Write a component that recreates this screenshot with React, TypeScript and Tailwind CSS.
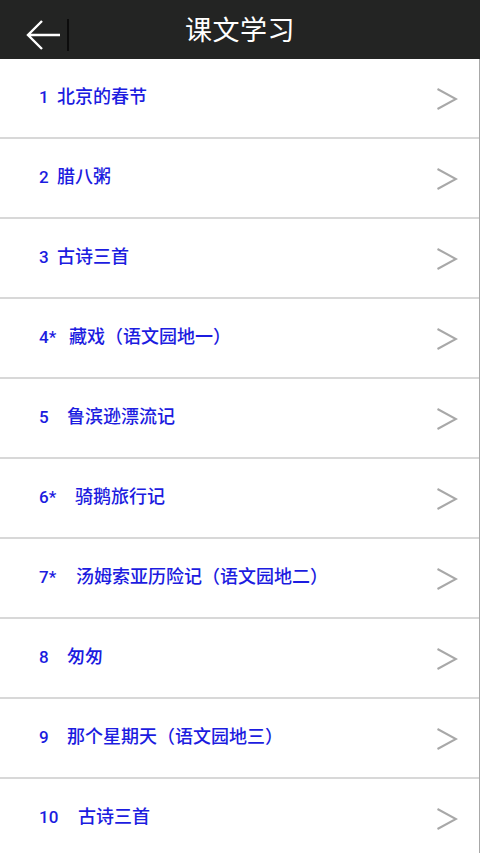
import React from "react";

type Lesson = { num: string; title: string; numClass: string };

const lessons: Lesson[] = [
  { num: "1", title: "北京的春节", numClass: "w-[18px]" },
  { num: "2", title: "腊八粥", numClass: "w-[18px]" },
  { num: "3", title: "古诗三首", numClass: "w-[18px]" },
  { num: "4*", title: "藏戏（语文园地一）", numClass: "w-[30px]" },
  { num: "5", title: "鲁滨逊漂流记", numClass: "w-[28px]" },
  { num: "6*", title: "骑鹅旅行记", numClass: "w-[36px]" },
  { num: "7*", title: "汤姆索亚历险记（语文园地二）", numClass: "w-[37px]" },
  { num: "8", title: "匆匆", numClass: "w-[28px]" },
  { num: "9", title: "那个星期天（语文园地三）", numClass: "w-[28px]" },
  { num: "10", title: "古诗三首", numClass: "w-[39px]" },
];

const Chevron = () => (
  <svg width="22" height="24" viewBox="0 0 22 24" fill="none">
    <polyline points="1.5,2 20,12 1.5,22" stroke="#a8a8a8" strokeWidth="2" strokeLinejoin="miter" />
  </svg>
);

const App = () => {
  return (
    <div className="w-[480px] h-[853px] overflow-hidden bg-white font-['Noto_Sans_CJK_SC','Noto_Sans',sans-serif]">
      {/* Header */}
      <div className="relative h-[59px] bg-[#232423] flex items-center justify-center">
        <div className="absolute left-[24px] top-[17px] flex items-center">
          <svg width="38" height="36" viewBox="0 0 38 36" fill="none">
            <path d="M36 18H5M18 4L4 18L18 32" stroke="#fff" strokeWidth="2.4" />
          </svg>
          <div className="ml-[5px] w-[2px] h-[32px] bg-[#0c0c0c]" />
        </div>
        <h1 className="text-white text-[27px] leading-none -mt-[2px] tracking-[0.5px]">课文学习</h1>
      </div>

      {/* Lesson list */}
      <ul className="border-r border-[#a8a8a8]">
        {lessons.map((l) => (
          <li
            key={l.num}
            className="h-[80px] border-b-2 border-[#d8d8d8] flex items-center justify-between pl-[39px] pr-[21px]"
          >
            <div className="flex items-baseline text-[18px] leading-none font-medium text-[#1c1ce0] -mt-[5px]">
              <span className={`${l.numClass} font-['Roboto',sans-serif] text-[17px]`}>{l.num}</span>
              <span>{l.title}</span>
            </div>
            <div className="mt-[2px]">
              <Chevron />
            </div>
          </li>
        ))}
      </ul>
    </div>
  );
};

export default App;
